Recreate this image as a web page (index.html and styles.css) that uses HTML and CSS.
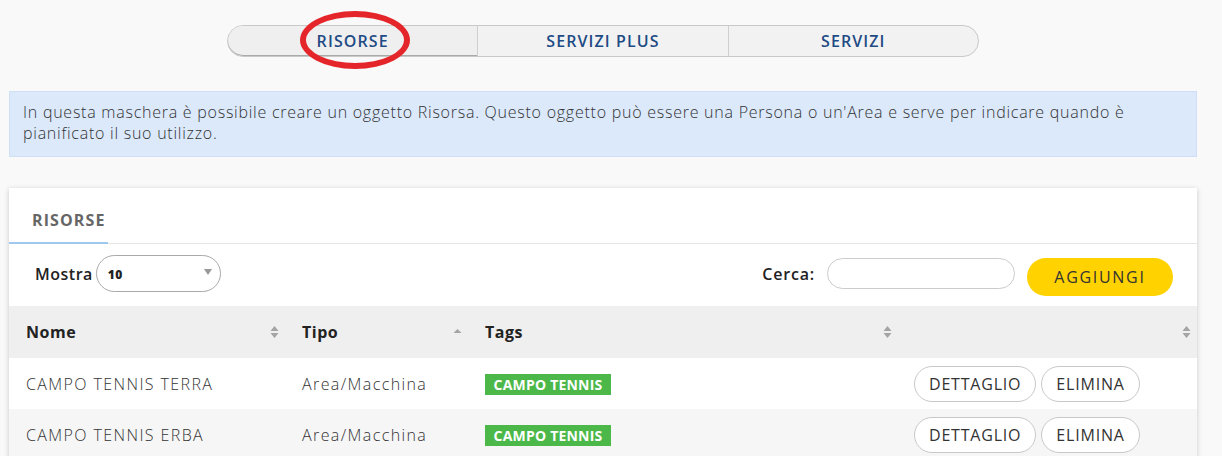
FILE: index.html
```html
<!DOCTYPE html>
<html lang="it">
<head>
<meta charset="utf-8">
<title>Risorse</title>
<link rel="stylesheet" href="styles.css">
</head>
<body>
<div class="page">
  <nav class="switch">
    <a class="seg seg-active"><span class="seg-label">RISORSE<span class="ring"></span></span></a>
    <a class="seg">SERVIZI PLUS</a>
    <a class="seg">SERVIZI</a>
  </nav>

  <div class="info">In questa maschera è possibile creare un oggetto Risorsa. Questo oggetto può essere una Persona o un'Area e serve per indicare quando è pianificato il suo utilizzo.</div>

  <section class="card">
    <div class="tabs"><span class="tab">RISORSE</span></div>
    <div class="controls">
      <label class="show">Mostra
        <span class="select"><span class="select-val">10</span><span class="caret"></span></span>
      </label>
      <div class="right-controls">
        <label class="search">Cerca: <span class="search-input"></span></label>
        <button class="btn-add">AGGIUNGI</button>
      </div>
    </div>
    <table class="grid">
      <colgroup>
        <col class="c1"><col class="c2"><col class="c3"><col class="c4">
      </colgroup>
      <thead>
        <tr>
          <th><div class="th">Nome<svg class="sort" viewBox="0 0 8 12"><path d="M4 0 8 5H0Z M4 12 0 7H8Z" fill="#a4a4a4"/></svg></div></th>
          <th><div class="th">Tipo<svg class="sort" viewBox="0 0 8 12"><path d="M4 3 8 7H0Z" fill="#a4a4a4"/></svg></div></th>
          <th><div class="th">Tags<svg class="sort" viewBox="0 0 8 12"><path d="M4 0 8 5H0Z M4 12 0 7H8Z" fill="#a4a4a4"/></svg></div></th>
          <th><div class="th"><span></span><svg class="sort" viewBox="0 0 8 12"><path d="M4 0 8 5H0Z M4 12 0 7H8Z" fill="#a4a4a4"/></svg></div></th>
        </tr>
      </thead>
      <tbody>
        <tr>
          <td>CAMPO TENNIS TERRA</td>
          <td>Area/Macchina</td>
          <td><span class="tag">CAMPO TENNIS</span></td>
          <td><div class="actions"><button class="btn-line">DETTAGLIO</button><button class="btn-line">ELIMINA</button></div></td>
        </tr>
        <tr class="alt">
          <td>CAMPO TENNIS ERBA</td>
          <td>Area/Macchina</td>
          <td><span class="tag">CAMPO TENNIS</span></td>
          <td><div class="actions"><button class="btn-line">DETTAGLIO</button><button class="btn-line">ELIMINA</button></div></td>
        </tr>
      </tbody>
    </table>
  </section>
</div>
</body>
</html>
```

FILE: styles.css
```css
* { box-sizing: border-box; }
html, body { margin: 0; height: 100%; }
body {
  background: #f9f9f9;
  font-family: "Open Sans", Lato, sans-serif;
  color: #333;
  overflow: hidden;
}
.page {
  width: 1188px;
  margin-left: 9px;
  padding-top: 25px;
}
.switch {
  display: flex;
  width: 752px;
  height: 32px;
  margin: 0 auto;
  border: 1px solid #c9c9c9;
  border-radius: 16px;
  background: #f2f2f2;
}
.seg {
  flex: 1;
  display: flex;
  align-items: center;
  justify-content: center;
  color: #1f4b85;
  font-size: 16px;
  font-weight: 600;
  letter-spacing: 1.1px;
  border-left: 1px solid #cfcfcf;
}
.seg:first-child { border-left: 0; border-radius: 15px 0 0 15px; }
.seg-active { background: #efefef; box-shadow: inset 0 -1px 0 #aaa; }
.seg-label { position: relative; }
.ring {
  position: absolute;
  left: -17px;
  top: -19px;
  width: 110px;
  height: 58px;
  border: 6px solid #e4262b;
  border-radius: 50%;
}
.info {
  margin-top: 34px;
  height: 66px;
  padding: 10px 13px 0;
  background: #dbe9fb;
  border: 1px solid #cfe0f6;
  font-size: 16px;
  font-weight: 300;
  line-height: 21px;
  letter-spacing: 0.75px;
  color: #333;
}
.card {
  margin-top: 31px;
  background: #fff;
  box-shadow: 0 1px 5px rgba(0,0,0,.2);
}
.tabs {
  height: 56px;
  border-bottom: 1px solid #e6e6e6;
  display: flex;
  align-items: flex-end;
}
.tab {
  display: block;
  width: 99px;
  padding: 0 0 11px 23px;
  font-size: 16px;
  font-weight: 700;
  letter-spacing: 1.1px;
  color: #666;
  border-bottom: 2px solid #9fc8ee;
  margin-bottom: -1px;
}
.controls {
  height: 62px;
  display: flex;
  align-items: center;
  justify-content: space-between;
  padding: 0 24px 3px 26px;
}
.show {
  display: flex;
  align-items: center;
  gap: 3px;
  font-size: 16px;
  font-weight: 600;
  letter-spacing: 0.5px;
  color: #222;
}
.select {
  position: relative;
  width: 125px;
  height: 37px;
  border: 1px solid #a9a9a9;
  border-radius: 19px;
  display: flex;
  align-items: center;
  padding: 2px 0 0 11px;
}
.select-val { font-size: 12px; font-weight: 800; color: #222; letter-spacing: 0.5px; }
.caret {
  position: absolute;
  right: 8px;
  top: 13px;
  border-left: 4px solid transparent;
  border-right: 4px solid transparent;
  border-top: 6px solid #999;
}
.right-controls { display: flex; align-items: center; gap: 12px; }
.search {
  display: flex;
  align-items: center;
  gap: 12px;
  font-size: 16px;
  font-weight: 600;
  letter-spacing: 0.8px;
  color: #222;
}
.search-input {
  display: block;
  width: 188px;
  height: 31px;
  border: 1px solid #ccc;
  border-radius: 16px;
  background: #fff;
}
.btn-add {
  width: 146px;
  height: 38px;
  margin-top: 6px;
  border: 0;
  border-radius: 19px;
  background: #ffd200;
  font-family: inherit;
  font-size: 16px;
  font-weight: 400;
  letter-spacing: 1.7px;
  color: #333;
}
.grid {
  width: 100%;
  border-collapse: collapse;
  table-layout: fixed;
}
.c1 { width: 276px; }
.c2 { width: 183px; }
.c3 { width: 430px; }
.c4 { width: 299px; }
thead tr { background: #efefef; height: 52px; }
th { padding: 0 6px 0 17px; text-align: left; }
.th {
  display: flex;
  align-items: center;
  justify-content: space-between;
  font-size: 16px;
  font-weight: 700;
  letter-spacing: 0.5px;
  color: #222;
}
.sort { width: 9px; height: 12px; }
tbody tr { height: 51px; background: #fff; }
tbody tr.alt { background: #f6f6f6; }
td {
  padding: 0 0 0 17px;
  font-size: 16px;
  font-weight: 300;
  letter-spacing: 1.4px;
  color: #333;
}
td:last-child { padding-left: 16px; }
.tag {
  display: inline-block;
  background: #4cb84a;
  color: #fff;
  font-size: 14px;
  font-weight: 700;
  letter-spacing: 0.2px;
  line-height: 21px;
  width: 126px;
  text-align: center;
}
.actions { display: flex; gap: 5px; }
.btn-line {
  height: 36px;
  padding: 0 14px;
  border: 1px solid #c8c8c8;
  border-radius: 18px;
  background: #fff;
  font-family: inherit;
  font-size: 16px;
  font-weight: 400;
  letter-spacing: 0.8px;
  color: #333;
}
```
